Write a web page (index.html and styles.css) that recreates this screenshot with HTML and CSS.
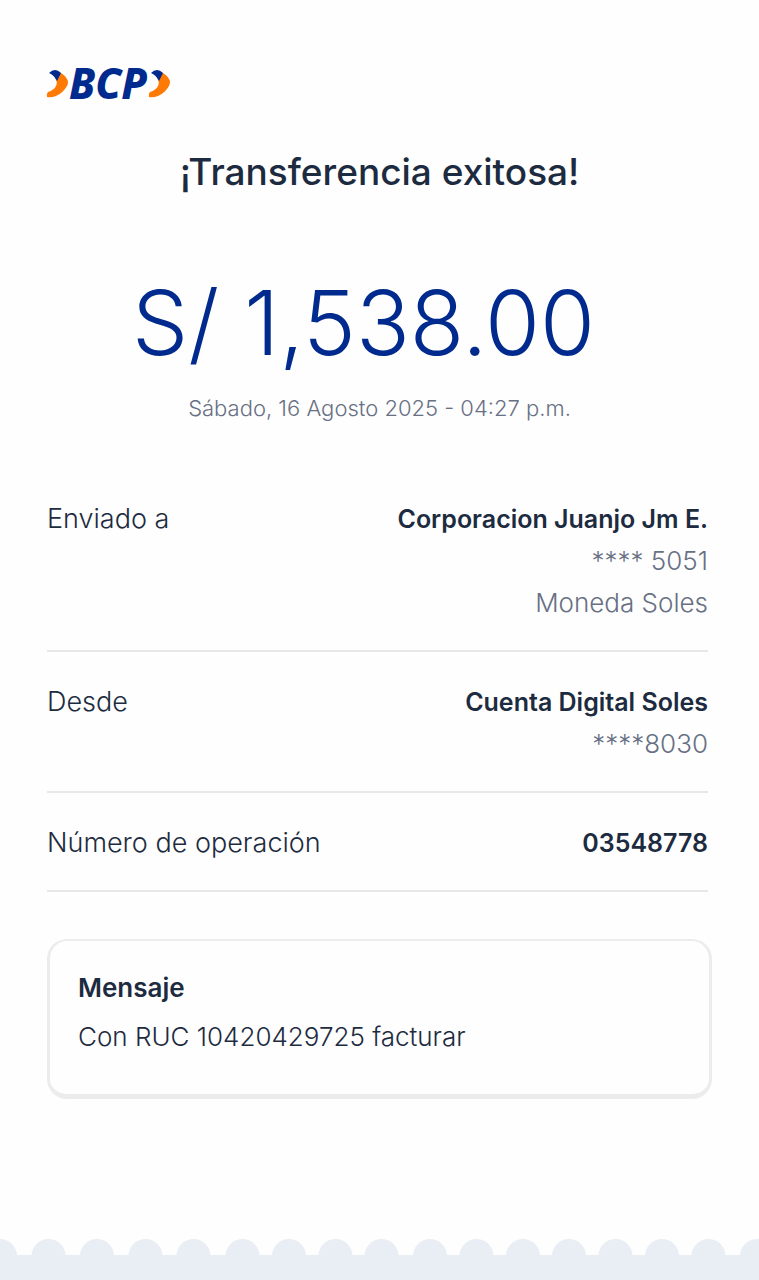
FILE: index.html
```html
<!DOCTYPE html>
<html lang="es">
<head>
  <meta charset="UTF-8">
  <meta name="viewport" content="width=device-width, initial-scale=1">
  <title>Transferencia exitosa</title>
  <link rel="stylesheet" href="styles.css">
</head>
<body>
  <main class="constancia">
    <!-- Logo -->
    <svg class="logo" viewBox="0 0 124 36" role="img" aria-label="BCP">
      <path class="logo-naranja" d="M12 6 Q18 9 20 13 Q22 16 20 20 Q16 27 9 30 Q4 32 0 31 Q-1 28 1 26 Q7 24 9 20 Q11 16 8 12 Z"/>
      <path class="logo-azul" d="M2 7 Q5 4 8 4 Q11 4 14 7 L10 15 Q7 9 2 7 Z"/>
      <text class="logo-texto" x="22" y="33">BCP</text>
      <path class="logo-naranja" d="M114 6 Q120 9 122 13 Q124 16 122 20 Q118 27 111 30 Q106 32 102 31 Q101 28 103 26 Q109 24 111 20 Q113 16 110 12 Z"/>
      <path class="logo-azul" d="M104 7 Q107 4 110 4 Q113 4 116 7 L112 15 Q109 9 104 7 Z"/>
    </svg>

    <h1 class="titulo">¡Transferencia exitosa!</h1>
    <p class="monto">S/ 1,538.00</p>
    <p class="fecha">Sábado, 16 Agosto 2025 - 04:27 p.m.</p>

    <!-- Datos de la operación -->
    <dl class="detalle">
      <div class="fila">
        <dt>Enviado a</dt>
        <dd>
          <strong>Corporacion Juanjo Jm E.</strong>
          <span>**** 5051</span>
          <span>Moneda Soles</span>
        </dd>
      </div>
      <div class="fila">
        <dt>Desde</dt>
        <dd>
          <strong>Cuenta Digital Soles</strong>
          <span>****8030</span>
        </dd>
      </div>
      <div class="fila">
        <dt>Número de operación</dt>
        <dd><strong>03548778</strong></dd>
      </div>
    </dl>

    <section class="mensaje">
      <h2>Mensaje</h2>
      <p>Con RUC 10420429725 facturar</p>
    </section>
  </main>

  <!-- Borde inferior del recibo -->
  <footer class="borde">
    <svg viewBox="0 0 759 41" aria-hidden="true">
      <rect x="0" y="16" width="759" height="25"/>
      <circle cx="0" cy="17" r="17"/>
      <circle cx="48.5" cy="17" r="17"/>
      <circle cx="97" cy="17" r="17"/>
      <circle cx="145.5" cy="17" r="17"/>
      <circle cx="193.5" cy="17" r="17"/>
      <circle cx="242.5" cy="17" r="17"/>
      <circle cx="289" cy="17" r="17"/>
      <circle cx="335.5" cy="17" r="17"/>
      <circle cx="381.5" cy="17" r="17"/>
      <circle cx="430" cy="17" r="17"/>
      <circle cx="476.5" cy="17" r="17"/>
      <circle cx="523" cy="17" r="17"/>
      <circle cx="569" cy="17" r="17"/>
      <circle cx="615.5" cy="17" r="17"/>
      <circle cx="662" cy="17" r="17"/>
      <circle cx="708.5" cy="17" r="17"/>
      <circle cx="757" cy="17" r="17"/>
    </svg>
  </footer>
</body>
</html>
```

FILE: styles.css
```css
* {
  box-sizing: border-box;
  margin: 0;
  padding: 0;
}
body {
  display: flex;
  flex-direction: column;
  min-height: 100vh;
  background-color: #fefefe;
  color: #1d2b40;
  font-family: Inter, "Noto Sans", sans-serif;
  font-size: 26px;
  font-weight: 300;
}
.constancia {
  flex: 1;
  padding: 66px 47px 40px;
}
.logo {
  display: block;
  width: 124px;
  height: 36px;
  overflow: visible;
}
.logo-azul {
  fill: #002a8d;
}
.logo-naranja {
  fill: #ff7a05;
}
.logo-texto {
  fill: #002a8d;
  font-family: "Noto Sans", sans-serif;
  font-size: 42px;
  font-weight: 800;
  font-style: italic;
}
.titulo {
  margin-top: 45px;
  font-size: 37px;
  line-height: 50px;
  font-weight: 500;
  text-align: center;
}
.monto {
  margin-top: 71px;
  padding-right: 32px;
  color: #002a8d;
  font-size: 89px;
  line-height: 110px;
  text-align: center;
}
.fecha {
  margin-top: 14px;
  color: #687083;
  font-size: 22px;
  line-height: 32px;
  text-align: center;
}
.detalle {
  margin-top: 45px;
  padding-right: 4px;
}
.fila {
  display: flex;
  justify-content: space-between;
  padding: 29px 0 26px;
  border-bottom: 2px solid #e8e8e8;
  line-height: 42px;
}
.fila dt {
  font-size: 27px;
}
.fila dd {
  color: #687083;
  text-align: right;
}
.fila strong,
.fila span {
  display: block;
}
.fila strong {
  color: #1d2b40;
  font-size: 25px;
  font-weight: 600;
}
.mensaje {
  margin-top: 47px;
  padding: 26px 28px 36px;
  border: 3px solid #ececec;
  border-top-width: 2px;
  border-bottom-width: 5px;
  border-radius: 20px;
}
.mensaje h2 {
  margin-bottom: 7px;
  font-size: 26px;
  line-height: 42px;
  font-weight: 600;
}
.mensaje p {
  line-height: 42px;
}
.borde svg {
  display: block;
  width: 100%;
  fill: #e9eef5;
}
```
